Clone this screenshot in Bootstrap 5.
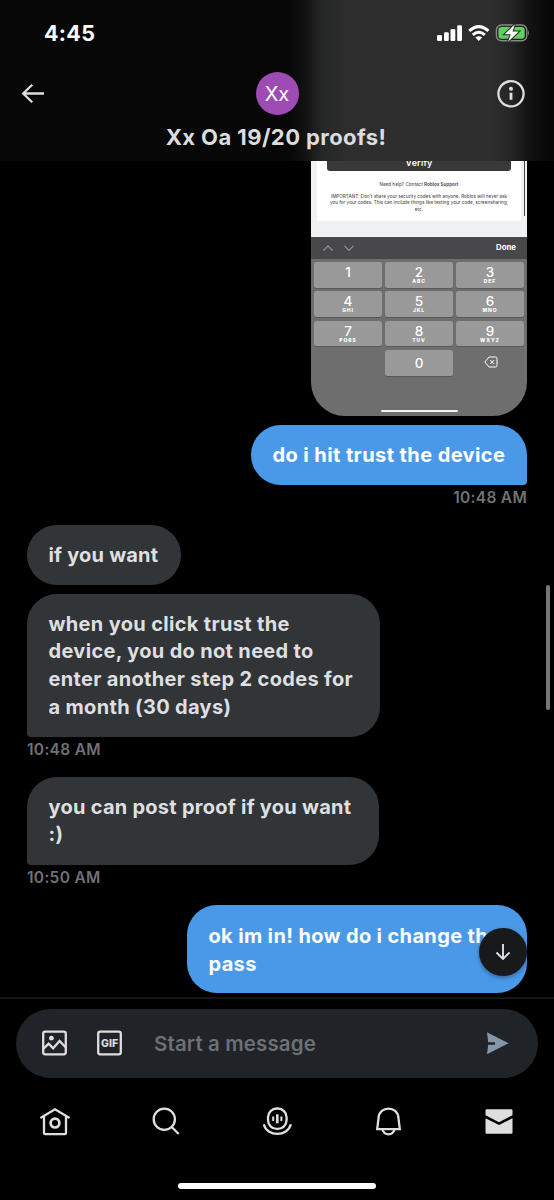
<!DOCTYPE html>
<html lang="en">
<head>
<meta charset="utf-8">
<meta name="viewport" content="width=device-width, initial-scale=1">
<title>Messages</title>
<link href="https://cdn.jsdelivr.net/npm/bootstrap@5.3.0/dist/css/bootstrap.min.css" rel="stylesheet">
<style>
body{background:#000;color:#dcdcdd;font-family:Inter,"Liberation Sans",sans-serif;overflow:hidden}
svg{display:block;flex:none}
.phone{width:554px;height:1200px}
.topbar{height:161px;background:linear-gradient(90deg,#070707 0,#070707 290px,#131313 306px,#252626 322px,#2d2d2d 345px,#2d2d2d 492px,#262626 510px,#141414 528px,#080808 546px,#070707 100%)}
.status{height:66px;padding:0 24px 0 44px}
.clock{font-size:21.5px;font-weight:700;color:#fff;letter-spacing:.3px;line-height:66px}
.navrow{height:56px;padding:0 28px 0 21px}
.avatar{width:43px;height:43px;background:#9e4bb5;color:#fff;font:20px/45px Inter,sans-serif;left:255.5px;top:6px}
.chat-name{font-size:22px;font-weight:700;line-height:30px;letter-spacing:.42px;padding-right:2px}
.thread{height:836px;padding:0 27px}
.shot{width:216px;height:255px;border-radius:0 0 34px 34px;background:#6e6e6e;color:#fff}
.shot-page{height:76px;background:#f0f1f3;padding:0 6px}
.shot-card{height:60px;background:#fff;border-radius:0 0 2px 2px;color:#555;font-size:4.6px;line-height:6.3px;font-weight:500}
.verify{width:184px;height:10px;background:#39393b;color:#fff;font-size:8.8px;font-weight:600;line-height:4.4px;border-radius:0 0 3px 3px;letter-spacing:.2px}
.shot-scroll{width:1.5px;height:55px;background:#444;right:2px;top:0}
.shot-tools{height:22px;background:#48484a;padding:0 11px 0 12px;font-size:7.8px;font-weight:700}
.pad{grid-template-columns:repeat(3,68px);gap:3.5px 3px;padding:3px}
.digit{height:25.8px;background:#999;border-radius:2.5px;box-shadow:0 1px 0 #5a5a5a;font-size:13.5px;line-height:14px;padding-top:3px;font-weight:500}
.digit small{display:block;font-size:5px;line-height:5px;font-weight:800;letter-spacing:.9px}
.digit.zero{padding-top:6px}
.shot-home{width:77px;height:2.5px;background:#f1f1f1;left:70px;bottom:4px}
.bubble{padding:17px 0 15.2px 21.5px;font-size:20px;font-weight:700;line-height:27.7px;border-radius:30px;white-space:nowrap}
.bubble.me{background:#4a99e9;color:#fff;align-self:flex-end}
.bubble.them{background:#323538;color:#dedfe0;align-self:flex-start}
.me.tail{border-bottom-right-radius:4px}
.them.tail{border-bottom-left-radius:4px}
.w-trust{width:276px;letter-spacing:.41px}
.w-want{width:154px;letter-spacing:.2px}
.w-codes{width:353px;letter-spacing:.33px}
.w-proof{width:352px;height:88px;letter-spacing:.26px}
.bubble.w-pass{width:340px;height:88px;letter-spacing:.35px;line-height:28.4px}
.stamp{height:40px;font-size:15.5px;line-height:25px;font-weight:600;color:#707276;letter-spacing:.3px}
.jump{width:48px;height:48px;background:#17191b;right:27px;top:767px;box-shadow:0 2px 4px #0005}
.track{width:4px;height:125px;background:#777779;right:4px;top:424px}
.footer-area{border-top:2px solid #141617;height:203px;padding-top:10px}
.composer{height:69px;margin:0 16px;border-radius:35px;background:#202327;padding:0 28px 0 25px}
.placeholder-text{font-size:20.5px;font-weight:600;color:#6d7074;margin-left:31px;padding-top:2px;letter-spacing:.12px}
.tabs{height:88px}
.home-line{width:198px;height:6px;background:#fff;margin-top:17px}
.ink{fill:none;stroke:#dedede;stroke-width:2.3}
</style>
</head>
<body>
<main class="phone d-flex flex-column position-relative overflow-hidden">
<header class="topbar flex-shrink-0">
  <div class="status d-flex justify-content-between align-items-center">
    <div class="clock">4:45</div>
    <svg width="94" height="20" viewBox="0 0 94 20" fill="#fff">
      <rect x="1" y="12" width="5" height="6" rx="1.3"/><rect x="8" y="9.2" width="4.8" height="8.8" rx="1.3"/><rect x="14.5" y="6" width="4.8" height="12" rx="1.3"/><rect x="21.2" y="2.2" width="4.8" height="15.8" rx="1.3"/>
      <g fill="none" stroke="#fff" stroke-width="3"><path d="M33.2 7.9Q42.8-.7 52.4 7.9"/><path d="M36.8 11.9Q42.8 6.7 48.8 11.9"/></g><path d="M39.4 14.5Q42.8 11.8 46.2 14.5L42.8 18Z"/>
      <rect x="60.4" y="2" width="30.4" height="15.7" rx="5" fill="none" stroke="#8b858b" stroke-width="1.4"/><rect x="62.5" y="4" width="26.2" height="11.7" rx="3" fill="#5fd061"/><path d="M92 7.2q2 2.7 0 5.4z" fill="#77757a"/>
      <path d="M78.9 1.2 68.6 11.3h6.1l-2.6 7.5L82.8 8.5h-6.3Z" stroke="#252725" stroke-width="2" paint-order="stroke"/>
    </svg>
  </div>
  <div class="navrow d-flex justify-content-between align-items-center position-relative">
    <svg width="24" height="22" viewBox="0 0 24 22" class="ink"><path d="M23 10.5H2.5M11.2 1.7 2.2 10.5l9 8.8"/></svg>
    <div class="avatar rounded-circle text-center position-absolute">Xx</div>
    <svg width="30" height="30" viewBox="0 0 30 30"><circle cx="15" cy="14.8" r="12.6" class="ink"/><circle cx="15" cy="9.8" r="2" fill="#dedede"/><path d="M13.6 13.8h2.8v7h-2.8z" fill="#dedede"/></svg>
  </div>
  <div class="chat-name text-center">Xx Oa 19/20 proofs!</div>
</header>

<section class="thread d-flex flex-column flex-shrink-0 overflow-hidden position-relative">
  <div class="shot align-self-end flex-shrink-0 overflow-hidden position-relative">
    <div class="shot-page">
      <div class="shot-card text-center">
        <div class="verify mx-auto overflow-hidden">Verify</div>
        <div style="padding-top:10.7px">Need help? Contact <b>Roblox Support</b></div>
        <div class="text-nowrap" style="padding-top:6px">IMPORTANT: Don't share your security codes with anyone. Roblox will never ask<br>you for your codes. This can include things like texting your code, screensharing,<br>etc.</div>
      </div>
      <div class="shot-scroll position-absolute"></div>
    </div>
    <div class="shot-tools d-flex align-items-center">
      <svg width="32" height="8" viewBox="0 0 32 8" fill="none" stroke="#929294" stroke-width="1.2"><path d="M.5 6.5 5 1.8l4.5 4.7M21.5 1.8 26 6.5l4.5-4.7"/></svg>
      <span class="ms-auto">Done</span>
    </div>
    <div class="pad d-grid text-center">
      <div class="digit">1</div><div class="digit">2<small>ABC</small></div><div class="digit">3<small>DEF</small></div>
      <div class="digit">4<small>GHI</small></div><div class="digit">5<small>JKL</small></div><div class="digit">6<small>MNO</small></div>
      <div class="digit">7<small>PQRS</small></div><div class="digit">8<small>TUV</small></div><div class="digit">9<small>WXYZ</small></div>
      <span></span><div class="digit zero">0</div>
      <div class="d-flex justify-content-center align-items-center"><svg width="15" height="13" viewBox="-1 0 15 13" fill="none" stroke="#fff" stroke-width="1"><path d="M5 1h6.5Q13 1 13 2.5v7Q13 11 11.5 11H5L.8 6ZM6.2 4l4 4m0-4-4 4"/></svg></div>
    </div>
    <div class="shot-home position-absolute rounded-pill"></div>
  </div>

  <div class="bubble me tail w-trust" style="margin-top:9px">do i hit trust the device</div>
  <div class="stamp text-end">10:48 AM</div>
  <div class="bubble them w-want">if you want</div>
  <div class="bubble them tail w-codes" style="margin-top:9px">when you click trust the<br>device, you do not need to<br>enter another step 2 codes for<br>a month (30 days)</div>
  <div class="stamp">10:48 AM</div>
  <div class="bubble them tail w-proof">you can post proof if you want<br>:)</div>
  <div class="stamp">10:50 AM</div>
  <div class="bubble me w-pass">ok im in! how do i change the<br>pass</div>
  <div class="track rounded-pill position-absolute"></div>
  <div class="jump rounded-circle position-absolute d-flex justify-content-center align-items-center">
    <svg width="16" height="18" viewBox="0 0 16 18" class="ink" style="stroke-width:1.9"><path d="M8 1v15M1.5 9.5 8 16l6.5-6.5"/></svg>
  </div>
</section>

<footer class="footer-area flex-shrink-0">
  <div class="composer d-flex align-items-center">
    <svg width="27" height="27" viewBox="0 .5 27 27" class="ink"><rect x="2.2" y="2.2" width="22.6" height="22.6" rx="2"/><circle cx="10.4" cy="8.7" r="2.4" fill="#dedede" stroke="none"/><path d="m2.5 19.2 5.2-5 4.4 4.5 6.5-7.2 6 6.2"/></svg>
    <svg width="27" height="27" viewBox="0 .5 27 27" style="margin-left:28px"><rect x="2.2" y="2.2" width="22.6" height="22.6" rx="2" class="ink"/><text x="13.6" y="17.3" text-anchor="middle" font-size="10.6" font-weight="800" fill="#dedede" textLength="17" lengthAdjust="spacingAndGlyphs">GIF</text></svg>
    <span class="placeholder-text">Start a message</span>
    <svg class="ms-auto" width="24" height="24" viewBox="0 .7 24 24"><path d="m1 1 21.5 11L1 23l1.2-9.5H9v-2.5H2.2Z" fill="#8297a9"/></svg>
  </div>
  <nav class="tabs row g-0 align-items-center">
    <div class="col d-flex justify-content-center"><svg width="32" height="30" viewBox="0 .7 32 30" class="ink"><path d="M1.4 11.6 16 3l14.6 8.6M5 9.7v17q0 1.1 1.1 1.1h19.8q1.1 0 1.1-1.1v-17"/><circle cx="16" cy="16.8" r="4.4" style="stroke-width:2.7"/></svg></div>
    <div class="col d-flex justify-content-center"><svg width="28" height="30" viewBox="0 .7 28 30" class="ink"><circle cx="12.3" cy="13" r="10.6"/><path d="m19.7 20.7 7 7"/></svg></div>
    <div class="col d-flex justify-content-center"><svg width="30" height="30" viewBox="0 .7 30 30" class="ink"><rect x="6" y="2.2" width="18.6" height="20.4" rx="8.8"/><path d="M1.8 18C4.8 30.8 25.8 30.8 28.8 18" /><path d="M11.2 10.3v4.4M19.4 10.3v4.4" style="stroke-width:2"/><path d="M15.3 8v9" style="stroke-width:2.6"/></svg></div>
    <div class="col d-flex justify-content-center"><svg width="26" height="30" viewBox="0 .7 26 30" class="ink"><path d="M2.2 22.8 3.5 12C4.2-1 22.8-1 23.5 12l1.3 10.8Z"/><path d="M7.5 23.2q1.5 4.8 6 4.8t6-4.8"/></svg></div>
    <div class="col d-flex justify-content-center"><svg width="28" height="26" viewBox="0 .3 28 26" fill="#dedede"><path d="M.5 1.8Q.5.5 1.8.5h24.4q1.3 0 1.3 1.3v4.7L14 13.5.5 6.5Z"/><path d="M.5 9.5 14 16.3l13.5-6.8v14.2q0 1.3-1.3 1.3H1.8Q.5 25 .5 23.7Z"/></svg></div>
  </nav>
  <div class="home-line rounded-pill mx-auto"></div>
</footer>
</main>
<script src="https://cdn.jsdelivr.net/npm/bootstrap@5.3.0/dist/js/bootstrap.bundle.min.js"></script>
</body>
</html>
